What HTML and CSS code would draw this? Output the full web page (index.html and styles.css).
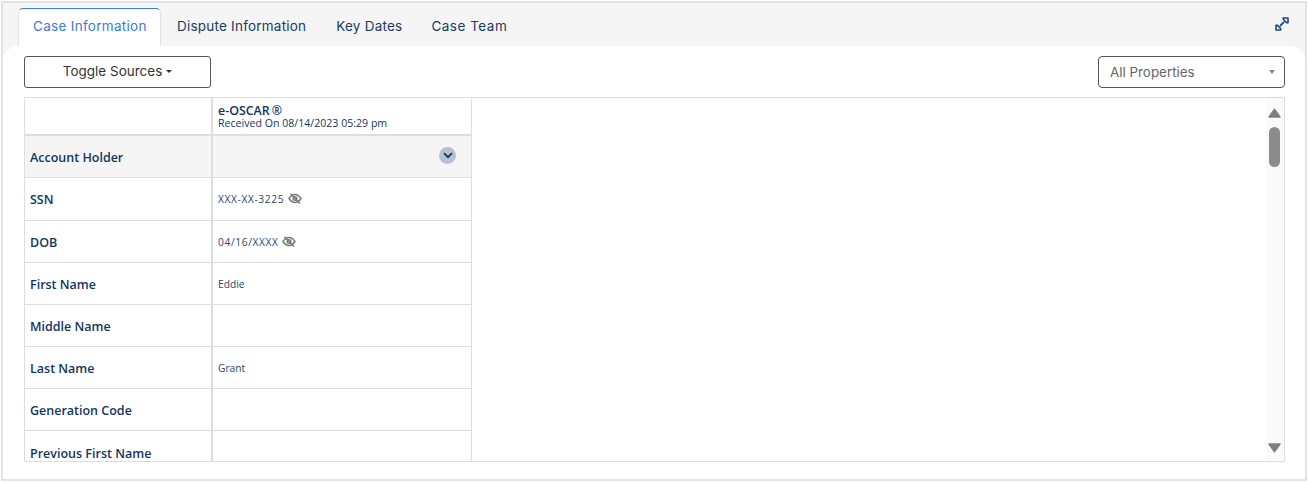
FILE: index.html
```html
<!DOCTYPE html>
<html lang="en">
<head>
<meta charset="utf-8">
<title>Case Information</title>
<link rel="stylesheet" href="styles.css">
</head>
<body>
<main class="panel">
  <header class="tabbar">
    <nav class="tabs">
      <a class="tab active">Case Information</a>
      <a class="tab">Dispute Information</a>
      <a class="tab">Key Dates</a>
      <a class="tab">Case Team</a>
    </nav>
    <svg class="expand" viewBox="0 0 14 14" width="14" height="14" fill="none" stroke="#1c4a7c">
      <path d="M8.2 1h4.8v4.8l-1.5-.2-3.1-3.1z" stroke-width="1.6" stroke-linejoin="round"/>
      <path d="M1 8.2V13h4.8l-.2-1.5-3.1-3.1z" stroke-width="1.6" stroke-linejoin="round"/>
      <path d="M9 5l-4 4" stroke-width="1.8"/>
    </svg>
  </header>
  <section class="content">
    <div class="controls">
      <button class="toggle">Toggle Sources<span class="caret"></span></button>
      <div class="select"><span>All Properties</span><span class="select-caret"></span></div>
    </div>
    <div class="frame">
      <div class="table">
        <div class="row head">
          <div class="label"></div>
          <div class="value source"><b>e-OSCAR<i class="reg">®</i></b><span>Received On 08/14/2023 05:29 pm</span></div>
        </div>
        <div class="row group">
          <div class="label">Account Holder</div>
          <div class="value">
            <span class="chev"><svg viewBox="0 0 10 7" width="10" height="7" fill="none" stroke="#12355f" stroke-width="1.7"><path d="M1 1.2l4 4 4-4"/></svg></span>
          </div>
        </div>
        <div class="row tall">
          <div class="label">SSN</div>
          <div class="value"><span class="masked">XXX-XX-3225</span>
            <svg class="eye" viewBox="0 0 14 11" width="14" height="11" fill="none" stroke="#777" stroke-width="1.4"><path d="M1 5.5C3 2.5 5 1.5 7 1.5s4 1 6 4c-2 3-4 4-6 4s-4-1-6-4z"/><circle cx="7" cy="5.5" r="1.8"/><path d="M2.5 .8l9.5 9.6"/></svg>
          </div>
        </div>
        <div class="row low">
          <div class="label">DOB</div>
          <div class="value"><span class="masked">04/16/XXXX</span>
            <svg class="eye" viewBox="0 0 14 11" width="14" height="11" fill="none" stroke="#777" stroke-width="1.4"><path d="M1 5.5C3 2.5 5 1.5 7 1.5s4 1 6 4c-2 3-4 4-6 4s-4-1-6-4z"/><circle cx="7" cy="5.5" r="1.8"/><path d="M2.5 .8l9.5 9.6"/></svg>
          </div>
        </div>
        <div class="row low"><div class="label">First Name</div><div class="value">Eddie</div></div>
        <div class="row low"><div class="label">Middle Name</div><div class="value"></div></div>
        <div class="row low"><div class="label">Last Name</div><div class="value">Grant</div></div>
        <div class="row low"><div class="label">Generation Code</div><div class="value"></div></div>
        <div class="row low last"><div class="label">Previous First Name</div><div class="value"></div></div>
      </div>
      <div class="scrollbar">
        <svg class="arrow" viewBox="0 0 13 10" width="13" height="10"><path d="M6.5 1.2L12 9H1z"/></svg>
        <span class="thumb"></span>
        <span class="spacer"></span>
        <svg class="arrow" viewBox="0 0 13 10" width="13" height="10"><path d="M6.5 8.8L12 1H1z"/></svg>
      </div>
    </div>
  </section>
</main>
</body>
</html>
```
FILE: styles.css
```css
* { box-sizing: border-box; }
html, body { margin: 0; height: 100%; background: #fff; }
body { padding: 1px 1px 2px 1px; font-family: "Open Sans", "Noto Sans", sans-serif; color: #12355f; }
.panel {
  height: 480px;
  border: 2px solid #e3e3e3;
  background: #f5f5f5;
  display: flex;
  flex-direction: column;
}
.tabbar {
  height: 43px;
  display: flex;
  justify-content: space-between;
  padding: 5px 16px 0 15px;
}
.tabs { display: flex; }
.tab {
  height: 38px;
  padding: 0 15px 3px 15px;
  display: flex;
  align-items: center;
  font-family: Inter, sans-serif;
  font-size: 13.5px;
  letter-spacing: .22px;
  white-space: nowrap;
  color: #173a66;
}
.tab:nth-child(2) { padding-left: 16px; }
.tab:nth-child(4) { letter-spacing: .5px; padding-left: 14px; }
.tab.active {
  width: 143px;
  padding: 0 0 3px 14px;
  letter-spacing: .3px;
  background: #fff;
  color: #3b7dd0;
  border: 1px solid #e3e3e3;
  border-top-color: #3b7dd0;
  border-bottom: 0;
  border-radius: 5px 5px 0 0;
}
.expand { margin-top: 9px; }
.content {
  flex: 1;
  min-height: 0;
  background: #fff;
  border-radius: 15px 15px 0 0;
  padding: 10px 20px 17px 21px;
  display: flex;
  flex-direction: column;
}
.controls {
  display: flex;
  justify-content: space-between;
  height: 41px;
}
.toggle {
  width: 187px;
  height: 32px;
  border: 1px solid #555;
  border-radius: 3px;
  background: #fff;
  font-family: Inter, sans-serif;
  font-size: 13.5px;
  color: #333;
  padding: 0 0 3px 0;
}
.caret {
  display: inline-block;
  margin-left: 4px;
  vertical-align: middle;
  border-left: 3px solid transparent;
  border-right: 3px solid transparent;
  border-top: 3px solid #333;
}
.select {
  width: 187px;
  height: 32px;
  border: 1px solid #555;
  border-radius: 4px;
  padding: 0 9px 0 11px;
  display: flex;
  justify-content: space-between;
  align-items: center;
  font-family: Inter, sans-serif;
  font-size: 13.4px;
  color: #666;
}
.select-caret {
  border-left: 3px solid transparent;
  border-right: 3px solid transparent;
  border-top: 4px solid #888;
}
.frame {
  flex: 1;
  min-height: 0;
  border: 1px solid #dedede;
  display: flex;
  justify-content: space-between;
  overflow: hidden;
}
.table { width: 447px; border-right: 1px solid #dedede; }
.row {
  display: grid;
  grid-template-columns: 188px 1fr;
  height: 42px;
  border-bottom: 1px solid #dedede;
}
.row.head { height: 38px; border-bottom-width: 2px; }
.row.group { height: 42px; background: #f5f5f5; }
.row.tall { height: 43px; }
.group .label { padding-top: 2px; }
.low .label { padding-top: 2px; }
.low .value { padding-top: 1px; gap: 3px; }
.last .label { padding-top: 3px; }
.label {
  border-right: 2px solid #dedede;
  padding-left: 5px;
  font-size: 12.5px;
  font-weight: 600;
  display: flex;
  align-items: center;
}
.value {
  padding-left: 5px;
  font-size: 10.2px;
  display: flex;
  align-items: center;
  gap: 4px;
  color: #24466f;
}
.masked { letter-spacing: .62px; }
.source {
  flex-direction: column;
  align-items: flex-start;
  justify-content: center;
  gap: 0;
  line-height: 12px;
  padding-top: 1px;
}
.source b { font-size: 12.4px; font-weight: 600; line-height: 13px; color: #12355f; }
.reg { font-style: normal; margin-left: 2px; }
.source span { font-size: 10.6px; color: #12355f; }
.group .value { justify-content: flex-end; padding-right: 15px; padding-bottom: 3px; }
.chev {
  width: 17px;
  height: 17px;
  border-radius: 50%;
  background: #b4c2d4;
  display: flex;
  align-items: center;
  justify-content: center;
}
.eye { margin-top: -1px; }
.scrollbar {
  width: 18px;
  background: #fafafa;
  display: flex;
  flex-direction: column;
  align-items: center;
  padding: 10px 1px 8px 0;
}
.arrow { fill: #808080; stroke: #808080; stroke-width: 1.4; stroke-linejoin: round; }
.thumb {
  width: 11px;
  height: 40px;
  margin-top: 9px;
  border-radius: 6px;
  background: #8c8c8c;
}
.spacer { flex: 1; }
```
